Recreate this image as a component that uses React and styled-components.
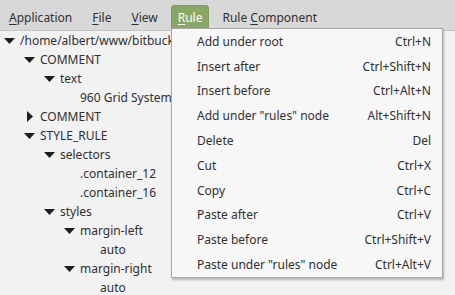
import styled, { createGlobalStyle } from "styled-components";

const Global = createGlobalStyle`
  html, body {
    margin: 0;
    padding: 0;
    background: #f2f2f2;
  }
  body {
    font-family: "Noto Sans", "Open Sans", sans-serif;
    font-size: 12px;
    color: #303030;
  }
`;

const menus = [
  { label: "Application" },
  { label: "File" },
  { label: "View" },
  { label: "Rule", open: true },
  { label: "Rule Component", at: 5 },
];

const tree = [
  { depth: 0, label: "/home/albert/www/bitbucket", arrow: "down" },
  { depth: 1, label: "COMMENT", arrow: "down" },
  { depth: 2, label: "text", arrow: "down" },
  { depth: 3, label: "960 Grid System" },
  { depth: 1, label: "COMMENT", arrow: "right" },
  { depth: 1, label: "STYLE_RULE", arrow: "down" },
  { depth: 2, label: "selectors", arrow: "down" },
  { depth: 3, label: ".container_12" },
  { depth: 3, label: ".container_16" },
  { depth: 2, label: "styles", arrow: "down" },
  { depth: 3, label: "margin-left", arrow: "down" },
  { depth: 4, label: "auto" },
  { depth: 3, label: "margin-right", arrow: "down" },
  { depth: 4, label: "auto" },
];

const items = [
  ["Add under root", "Ctrl+N"],
  ["Insert after", "Ctrl+Shift+N"],
  ["Insert before", "Ctrl+Alt+N"],
  ['Add under "rules" node', "Alt+Shift+N"],
  ["Delete", "Del"],
  ["Cut", "Ctrl+X"],
  ["Copy", "Ctrl+C"],
  ["Paste after", "Ctrl+V"],
  ["Paste before", "Ctrl+Shift+V"],
  ['Paste under "rules" node', "Ctrl+Alt+V"],
];

const Window = styled.div`
  position: relative;
  width: 455px;
  height: 295px;
  overflow: hidden;
  background: #f2f2f2;
`;

const MenuBar = styled.div`
  display: flex;
  align-items: flex-end;
  gap: 6px;
  height: 31px;
  padding-left: 2px;
  background: #d8d8d8;
  border-bottom: 1px solid #c6c6c6;
  box-sizing: border-box;
`;

const MenuTitle = styled.div`
  height: 24px;
  box-sizing: border-box;
  padding: 2px 7px 0;
  line-height: 22px;
  margin-bottom: 1px;
  border-radius: 4px 4px 0 0;
  color: ${(p) => (p.$open ? "#ffffff" : "#303030")};
  background: ${(p) => (p.$open ? "#8aa865" : "transparent")};
  box-shadow: ${(p) => (p.$open ? "inset 0 0 0 1px #7f9b5c" : "none")};
  u {
    text-decoration-thickness: 1px;
    text-underline-offset: 2px;
  }
`;

const Tree = styled.div`
  padding-top: 0;
`;

const Row = styled.div`
  display: flex;
  align-items: center;
  height: 19px;
  padding-left: ${(p) => 4 + p.$depth * 20}px;
  white-space: nowrap;
`;

const Arrow = styled.span`
  width: 16px;
  display: flex;
  justify-content: flex-start;
`;

const Label = styled.span`
  padding-left: ${(p) => (p.$leaf ? 16 : 0)}px;
`;

const Popup = styled.div`
  position: absolute;
  left: 171px;
  top: 28px;
  width: 272px;
  padding: 0;
  background: #f7f7f7;
  border: 1px solid #a8a8a8;
  box-shadow: 1px 2px 2px rgba(0, 0, 0, 0.25);
  box-sizing: border-box;
`;

const Item = styled.div`
  display: flex;
  justify-content: space-between;
  align-items: center;
  height: 24.8px;
  padding: 0 11px 0 25px;
`;

const Shortcut = styled.span`
  color: #303030;
`;

function Triangle({ dir }) {
  return dir === "down" ? (
    <svg width="11" height="6" viewBox="0 0 11 6">
      <path d="M0 0 H11 L5.5 6 Z" fill="#1e1e1e" />
    </svg>
  ) : (
    <svg width="6" height="11" viewBox="0 0 6 11" style={{ marginLeft: 3 }}>
      <path d="M0 0 V11 L6 5.5 Z" fill="#1e1e1e" />
    </svg>
  );
}

function MnemonicLabel({ label, at = 0 }) {
  return (
    <>
      {label.slice(0, at)}
      <u>{label[at]}</u>
      {label.slice(at + 1)}
    </>
  );
}

export default function App() {
  return (
    <Window>
      <Global />
      <MenuBar>
        {menus.map((m) => (
          <MenuTitle key={m.label} $open={m.open}>
            <MnemonicLabel label={m.label} at={m.at} />
          </MenuTitle>
        ))}
      </MenuBar>
      <Tree>
        {tree.map((n, i) => (
          <Row key={i} $depth={n.depth}>
            {n.arrow && (
              <Arrow>
                <Triangle dir={n.arrow} />
              </Arrow>
            )}
            <Label $leaf={!n.arrow}>{n.label}</Label>
          </Row>
        ))}
      </Tree>
      <Popup>
        {items.map(([label, keys]) => (
          <Item key={label}>
            <span>{label}</span>
            <Shortcut>{keys}</Shortcut>
          </Item>
        ))}
      </Popup>
    </Window>
  );
}
